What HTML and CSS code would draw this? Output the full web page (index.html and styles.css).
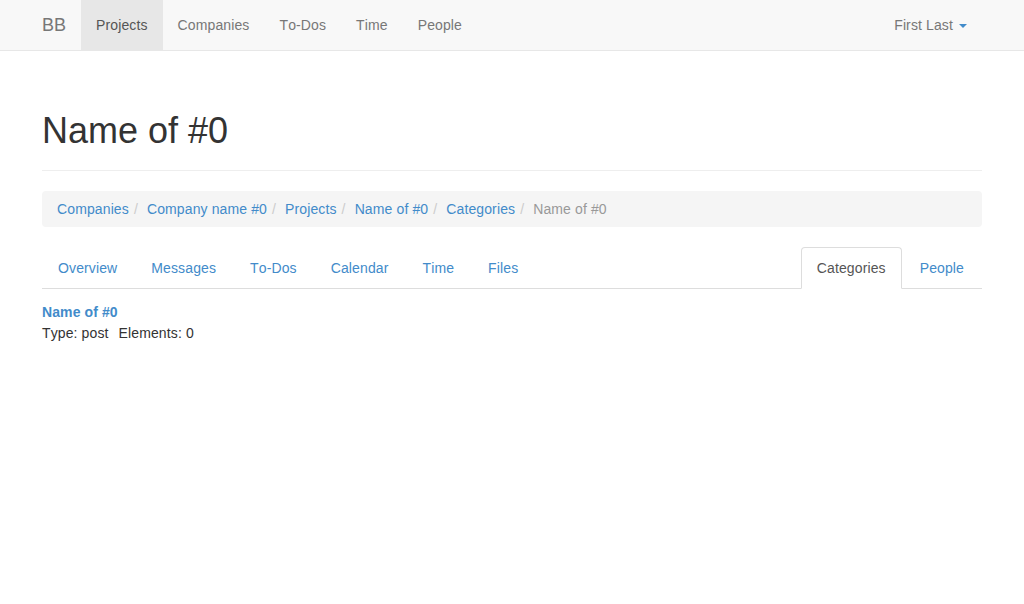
FILE: index.html
```html
<!DOCTYPE html>
<html lang="en">
<head>
  <meta charset="UTF-8">
  <title>Name of #0</title>
  <link rel="stylesheet" href="styles.css">
</head>
<body>
<nav class="navbar">
  <div class="container navbar-inner">
    <a class="brand" href="#">BB</a>
    <ul class="nav-links">
      <li class="active"><a href="#">Projects</a></li>
      <li><a href="#">Companies</a></li>
      <li><a href="#">To-Dos</a></li>
      <li><a href="#">Time</a></li>
      <li><a href="#">People</a></li>
    </ul>
    <a class="user-menu" href="#">First Last <span class="caret"></span></a>
  </div>
</nav>

<div class="container">
  <div class="page-header">
    <h1>Name of #0</h1>
  </div>

  <ol class="breadcrumb">
    <li><a href="#">Companies</a></li>
    <li><a href="#">Company name #0</a></li>
    <li><a href="#">Projects</a></li>
    <li><a href="#">Name of #0</a></li>
    <li><a href="#">Categories</a></li>
    <li class="current">Name of #0</li>
  </ol>

  <ul class="tabs">
    <li><a href="#">Overview</a></li>
    <li><a href="#">Messages</a></li>
    <li><a href="#">To-Dos</a></li>
    <li><a href="#">Calendar</a></li>
    <li><a href="#">Time</a></li>
    <li><a href="#">Files</a></li>
    <li class="tab-right active"><a href="#">Categories</a></li>
    <li><a href="#">People</a></li>
  </ul>

  <div class="category">
    <a class="category-name" href="#">Name of #0</a>
    <div class="category-meta">
      <span>Type: post</span>
      <span>Elements: 0</span>
    </div>
  </div>
</div>
</body>
</html>
```

FILE: styles.css
```css
* {
  box-sizing: border-box;
}

body {
  margin: 0;
  font-family: "Liberation Sans", Arial, sans-serif;
  font-size: 14px;
  line-height: 20px;
  font-kerning: none;
  letter-spacing: 0.12px;
  color: #333;
  background-color: #fff;
}

a {
  color: #428bca;
  text-decoration: none;
}

ul, ol {
  list-style: none;
  margin: 0;
  padding: 0;
}

.container {
  width: 970px;
  margin: 0 auto;
  padding: 0 15px;
}

.navbar {
  background-color: #f8f8f8;
  border-bottom: 1px solid #e7e7e7;
}

.navbar-inner {
  display: flex;
  height: 50px;
  padding-right: 15px;
}

.brand {
  font-size: 18px;
  line-height: 50px;
  letter-spacing: 0;
  color: #777;
  margin-right: 15px;
}

.nav-links {
  display: flex;
}

.nav-links a {
  display: block;
  padding: 15px;
  color: #777;
}

.nav-links .active a {
  color: #555;
  background-color: #e7e7e7;
}

.user-menu {
  margin-left: auto;
  padding: 15px;
  color: #777;
}

.caret {
  display: inline-block;
  width: 0;
  height: 0;
  margin-left: 2px;
  vertical-align: middle;
  border-top: 4px solid #428bca;
  border-left: 4px solid transparent;
  border-right: 4px solid transparent;
}

.page-header {
  margin: 60px 0 20px;
  padding-bottom: 9px;
  border-bottom: 1px solid #eee;
}

h1 {
  margin: 0 0 10px;
  font-size: 36px;
  font-weight: 500;
  line-height: 40px;
  letter-spacing: 0;
}

.breadcrumb {
  display: flex;
  padding: 8px 15px;
  margin-bottom: 20px;
  background-color: #f5f5f5;
  border-radius: 4px;
}

.breadcrumb li + li::before {
  content: "/\00a0";
  padding: 0 5px;
  color: #ccc;
}

.breadcrumb .current {
  color: #999;
}

.tabs {
  display: flex;
  border-bottom: 1px solid #ddd;
}

.tabs li {
  margin-bottom: -1px;
}

.tabs a {
  display: block;
  padding: 10px 15px;
  margin-right: 2px;
  line-height: 20px;
  border: 1px solid transparent;
  border-radius: 4px 4px 0 0;
}

.tabs .tab-right {
  margin-left: auto;
}

.tabs .active a {
  color: #555;
  background-color: #fff;
  border-color: #ddd #ddd #fff;
}

.category {
  margin-top: 13px;
}

.category-name {
  display: block;
  font-weight: bold;
  letter-spacing: 0.1px;
}

.category-meta {
  display: flex;
  gap: 10px;
  margin-top: 1px;
}
```
